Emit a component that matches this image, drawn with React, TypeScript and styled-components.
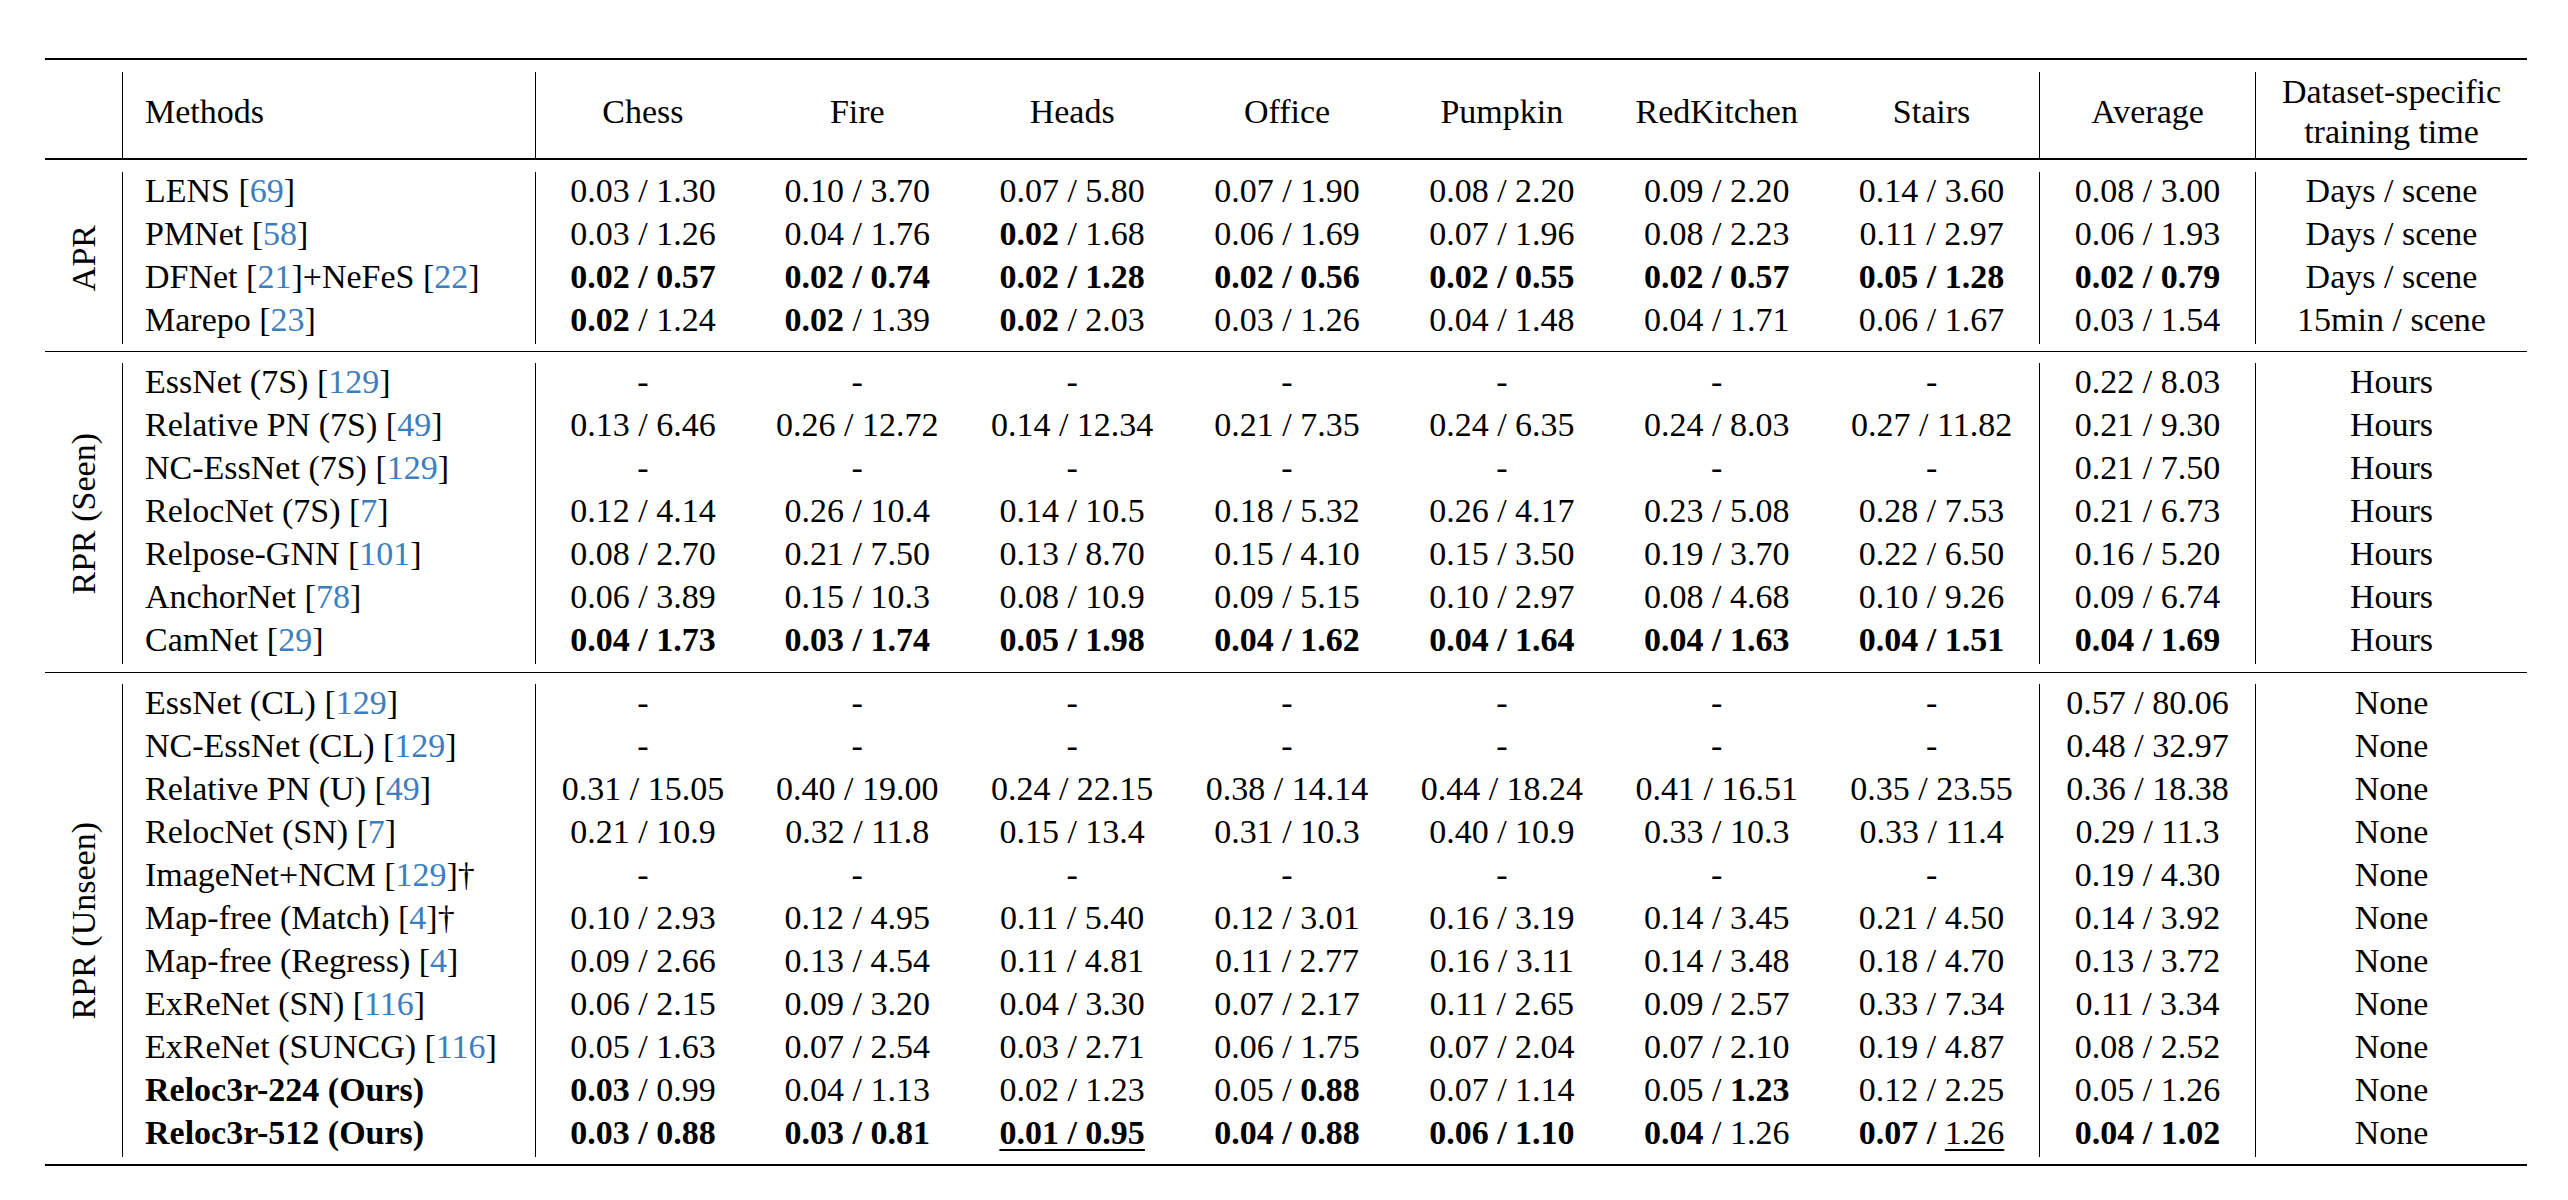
import React from 'react';
import styled, { createGlobalStyle } from 'styled-components';

const GlobalStyle = createGlobalStyle`
  html, body { margin: 0; padding: 0; background: #ffffff; }
  body {
    font-family: "Liberation Serif", "Times New Roman", serif;
    color: #000000;
    font-size: 34px;
  }
`;

const COLS = '77px 413px repeat(7, 1fr) 216px 272px';

const Page = styled.div`
  padding: 58px 0 0 45px;
`;

const Table = styled.div`
  width: 2482px;
  border-top: 2px solid #000;
  border-bottom: 2px solid #000;
`;

const HeaderRow = styled.div`
  display: grid;
  grid-template-columns: ${COLS};
  padding-top: 12px;
  border-bottom: 2px solid #000;
`;

const HeadCell = styled.div<{ $rule?: boolean; $left?: boolean }>`
  box-sizing: border-box;
  height: 86px;
  padding-bottom: 7px;
  padding-left: ${(p) => (p.$left ? '22px' : '0')};
  display: flex;
  align-items: center;
  justify-content: ${(p) => (p.$left ? 'flex-start' : 'center')};
  text-align: center;
  line-height: 40px;
  border-left: ${(p) => (p.$rule ? '1px solid #000' : 'none')};
  white-space: pre-line;
`;

const Section = styled.div<{ $top: number; $bottom: number; $last?: boolean }>`
  display: grid;
  grid-template-columns: ${COLS};
  grid-auto-rows: 43px;
  padding: ${(p) => p.$top}px 0 ${(p) => p.$bottom}px;
  border-bottom: ${(p) => (p.$last ? 'none' : '1px solid #000')};
`;

const LabelCell = styled.div<{ $span: number }>`
  grid-column: 1;
  grid-row: 1 / span ${(p) => p.$span};
  display: flex;
  align-items: center;
  justify-content: center;
`;

const Label = styled.span`
  writing-mode: vertical-rl;
  transform: rotate(180deg);
  line-height: 1;
  white-space: nowrap;
`;

const Cell = styled.div<{ $rule?: boolean; $left?: boolean; $strong?: boolean }>`
  box-sizing: border-box;
  height: 43px;
  line-height: 38px;
  padding-bottom: 5px;
  padding-left: ${(p) => (p.$left ? '22px' : '0')};
  text-align: ${(p) => (p.$left ? 'left' : 'center')};
  white-space: nowrap;
  font-weight: ${(p) => (p.$strong ? 700 : 400)};
  border-left: ${(p) => (p.$rule ? '1px solid #000' : 'none')};
`;

const Seg = styled.span<{ $bold: boolean; $under: boolean }>`
  font-weight: ${(p) => (p.$bold ? 700 : 400)};
  text-decoration: ${(p) => (p.$under ? 'underline' : 'none')};
  text-decoration-thickness: 1.5px;
  text-underline-offset: 5px;
`;

const Cite = styled.span`
  color: #3d7ebf;
`;

type Row = {
  name: string;
  strong?: boolean;
  vals: string[];
  avg: string;
  time: string;
};

const DASH = ['-', '-', '-', '-', '-', '-', '-'];

const apr: Row[] = [
  { name: 'LENS [69]', vals: ['0.03 / 1.30', '0.10 / 3.70', '0.07 / 5.80', '0.07 / 1.90', '0.08 / 2.20', '0.09 / 2.20', '0.14 / 3.60'], avg: '0.08 / 3.00', time: 'Days / scene' },
  { name: 'PMNet [58]', vals: ['0.03 / 1.26', '0.04 / 1.76', '*0.02* / 1.68', '0.06 / 1.69', '0.07 / 1.96', '0.08 / 2.23', '0.11 / 2.97'], avg: '0.06 / 1.93', time: 'Days / scene' },
  { name: 'DFNet [21]+NeFeS [22]', vals: ['*0.02 / 0.57*', '*0.02 / 0.74*', '*0.02 / 1.28*', '*0.02 / 0.56*', '*0.02 / 0.55*', '*0.02 / 0.57*', '*0.05 / 1.28*'], avg: '*0.02 / 0.79*', time: 'Days / scene' },
  { name: 'Marepo [23]', vals: ['*0.02* / 1.24', '*0.02* / 1.39', '*0.02* / 2.03', '0.03 / 1.26', '0.04 / 1.48', '0.04 / 1.71', '0.06 / 1.67'], avg: '0.03 / 1.54', time: '15min / scene' },
];

const seen: Row[] = [
  { name: 'EssNet (7S) [129]', vals: DASH, avg: '0.22 / 8.03', time: 'Hours' },
  { name: 'Relative PN (7S) [49]', vals: ['0.13 / 6.46', '0.26 / 12.72', '0.14 / 12.34', '0.21 / 7.35', '0.24 / 6.35', '0.24 / 8.03', '0.27 / 11.82'], avg: '0.21 / 9.30', time: 'Hours' },
  { name: 'NC-EssNet (7S) [129]', vals: DASH, avg: '0.21 / 7.50', time: 'Hours' },
  { name: 'RelocNet (7S) [7]', vals: ['0.12 / 4.14', '0.26 / 10.4', '0.14 / 10.5', '0.18 / 5.32', '0.26 / 4.17', '0.23 / 5.08', '0.28 / 7.53'], avg: '0.21 / 6.73', time: 'Hours' },
  { name: 'Relpose-GNN [101]', vals: ['0.08 / 2.70', '0.21 / 7.50', '0.13 / 8.70', '0.15 / 4.10', '0.15 / 3.50', '0.19 / 3.70', '0.22 / 6.50'], avg: '0.16 / 5.20', time: 'Hours' },
  { name: 'AnchorNet [78]', vals: ['0.06 / 3.89', '0.15 / 10.3', '0.08 / 10.9', '0.09 / 5.15', '0.10 / 2.97', '0.08 / 4.68', '0.10 / 9.26'], avg: '0.09 / 6.74', time: 'Hours' },
  { name: 'CamNet [29]', vals: ['*0.04 / 1.73*', '*0.03 / 1.74*', '*0.05 / 1.98*', '*0.04 / 1.62*', '*0.04 / 1.64*', '*0.04 / 1.63*', '*0.04 / 1.51*'], avg: '*0.04 / 1.69*', time: 'Hours' },
];

const unseen: Row[] = [
  { name: 'EssNet (CL) [129]', vals: DASH, avg: '0.57 / 80.06', time: 'None' },
  { name: 'NC-EssNet (CL) [129]', vals: DASH, avg: '0.48 / 32.97', time: 'None' },
  { name: 'Relative PN (U) [49]', vals: ['0.31 / 15.05', '0.40 / 19.00', '0.24 / 22.15', '0.38 / 14.14', '0.44 / 18.24', '0.41 / 16.51', '0.35 / 23.55'], avg: '0.36 / 18.38', time: 'None' },
  { name: 'RelocNet (SN) [7]', vals: ['0.21 / 10.9', '0.32 / 11.8', '0.15 / 13.4', '0.31 / 10.3', '0.40 / 10.9', '0.33 / 10.3', '0.33 / 11.4'], avg: '0.29 / 11.3', time: 'None' },
  { name: 'ImageNet+NCM [129]†', vals: DASH, avg: '0.19 / 4.30', time: 'None' },
  { name: 'Map-free (Match) [4]†', vals: ['0.10 / 2.93', '0.12 / 4.95', '0.11 / 5.40', '0.12 / 3.01', '0.16 / 3.19', '0.14 / 3.45', '0.21 / 4.50'], avg: '0.14 / 3.92', time: 'None' },
  { name: 'Map-free (Regress) [4]', vals: ['0.09 / 2.66', '0.13 / 4.54', '0.11 / 4.81', '0.11 / 2.77', '0.16 / 3.11', '0.14 / 3.48', '0.18 / 4.70'], avg: '0.13 / 3.72', time: 'None' },
  { name: 'ExReNet (SN) [116]', vals: ['0.06 / 2.15', '0.09 / 3.20', '0.04 / 3.30', '0.07 / 2.17', '0.11 / 2.65', '0.09 / 2.57', '0.33 / 7.34'], avg: '0.11 / 3.34', time: 'None' },
  { name: 'ExReNet (SUNCG) [116]', vals: ['0.05 / 1.63', '0.07 / 2.54', '0.03 / 2.71', '0.06 / 1.75', '0.07 / 2.04', '0.07 / 2.10', '0.19 / 4.87'], avg: '0.08 / 2.52', time: 'None' },
  { name: 'Reloc3r-224 (Ours)', strong: true, vals: ['*0.03* / 0.99', '0.04 / 1.13', '0.02 / 1.23', '0.05 / *0.88*', '0.07 / 1.14', '0.05 / *1.23*', '0.12 / 2.25'], avg: '0.05 / 1.26', time: 'None' },
  { name: 'Reloc3r-512 (Ours)', strong: true, vals: ['*0.03 / 0.88*', '*0.03 / 0.81*', '_*0.01 / 0.95*_', '*0.04 / 0.88*', '*0.06 / 1.10*', '*0.04* / 1.26', '*0.07 /* _1.26_'], avg: '*0.04 / 1.02*', time: 'None' },
];

const renderMarked = (s: string) => {
  const out: React.ReactNode[] = [];
  let bold = false;
  let under = false;
  let buf = '';
  const flush = () => {
    if (buf) {
      out.push(
        <Seg key={out.length} $bold={bold} $under={under}>
          {buf}
        </Seg>
      );
      buf = '';
    }
  };
  for (const ch of s) {
    if (ch === '*') {
      flush();
      bold = !bold;
    } else if (ch === '_') {
      flush();
      under = !under;
    } else buf += ch;
  }
  flush();
  return out;
};

const renderName = (s: string) => {
  const parts = s.split(/\[(\d+)\]/);
  return parts.map((p, i) =>
    i % 2 === 1 ? (
      <React.Fragment key={i}>
        [<Cite>{p}</Cite>]
      </React.Fragment>
    ) : (
      <React.Fragment key={i}>{p}</React.Fragment>
    )
  );
};

const BodyRow = ({ row }: { row: Row }) => (
  <>
    <Cell $rule $left $strong={row.strong}>
      {renderName(row.name)}
    </Cell>
    {row.vals.map((v, i) => (
      <Cell key={i} $rule={i === 0}>
        {renderMarked(v)}
      </Cell>
    ))}
    <Cell $rule>{renderMarked(row.avg)}</Cell>
    <Cell $rule>{row.time}</Cell>
  </>
);

const Block = ({
  label,
  rows,
  top,
  bottom,
  last,
}: {
  label: string;
  rows: Row[];
  top: number;
  bottom: number;
  last?: boolean;
}) => (
  <Section $top={top} $bottom={bottom} $last={last}>
    <LabelCell $span={rows.length}>
      <Label>{label}</Label>
    </LabelCell>
    {rows.map((r, i) => (
      <BodyRow key={i} row={r} />
    ))}
  </Section>
);

const scenes = ['Chess', 'Fire', 'Heads', 'Office', 'Pumpkin', 'RedKitchen', 'Stairs'];

export default function App() {
  return (
    <>
      <GlobalStyle />
      <Page>
        <Table>
          <HeaderRow>
            <HeadCell />
            <HeadCell $rule $left>
              Methods
            </HeadCell>
            {scenes.map((s, i) => (
              <HeadCell key={s} $rule={i === 0}>
                {s}
              </HeadCell>
            ))}
            <HeadCell $rule>Average</HeadCell>
            <HeadCell $rule>{'Dataset-specific\ntraining time'}</HeadCell>
          </HeaderRow>
          <Block label="APR" rows={apr} top={12} bottom={7} />
          <Block label="RPR (Seen)" rows={seen} top={11} bottom={8} />
          <Block label="RPR (Unseen)" rows={unseen} top={11} bottom={7} last />
        </Table>
      </Page>
    </>
  );
}
